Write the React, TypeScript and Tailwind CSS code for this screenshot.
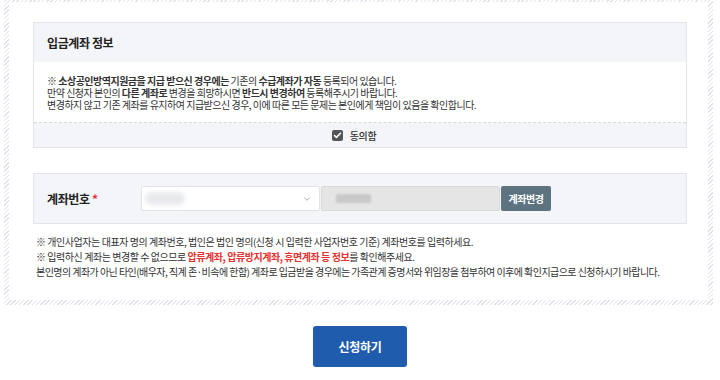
import { ChevronDown, Check } from "lucide-react";

const font = { fontFamily: '"Noto Sans CJK KR", "Noto Sans", sans-serif' };

/* ── 입금계좌 정보 panel ── */
function AccountInfoPanel() {
  return (
    <div className="border border-[#e3e5ea] bg-white">
      <div className="h-[39px] bg-[#f4f5f8] flex items-center px-[13px]">
        <h3 className="text-[12px] font-bold text-[#222] tracking-[-0.4px]">입금계좌 정보</h3>
      </div>
      <div className="px-[13px] pt-[13px] pb-[11px] text-[10px] leading-[12px] text-[#333] tracking-[-0.5px] border-b border-dashed border-[#d6d8dd]">
        <p>
          ※ <b>소상공인방역지원금을 지급 받으신 경우에는</b> 기존의 <b>수급계좌가 자동</b> 등록되어 있습니다.
        </p>
        <p>
          만약 신청자 본인의 <b>다른 계좌로</b> 변경을 희망하시면 <b>반드시 변경하여</b> 등록해주시기 바랍니다.
        </p>
        <p>변경하지 않고 기존 계좌를 유지하여 지급받으신 경우, 이에 따른 모든 문제는 본인에게 책임이 있음을 확인합니다.</p>
      </div>
      <div className="h-[24px] bg-[#f4f5f8] flex items-center justify-center gap-[7px] pr-[12px]">
        <span className="w-[11px] h-[11px] rounded-[2px] bg-[#555] flex items-center justify-center">
          <Check className="w-[9px] h-[9px] text-white" strokeWidth={4} />
        </span>
        <span className="text-[10px] font-medium text-[#333] tracking-[-0.4px]">동의함</span>
      </div>
    </div>
  );
}

/* ── 계좌번호 row ── */
function AccountNumberRow() {
  return (
    <div className="mt-[25px] h-[51px] border border-[#e3e5ea] bg-[#f4f5f8] flex items-center pl-[13px]">
      <div className="w-[94px] text-[12px] font-bold text-[#222] tracking-[-0.4px]">
        계좌번호 <span className="text-[#e8302f]">*</span>
      </div>
      <div className="w-[179px] h-[25px] bg-white border border-[#e1e3e8] rounded-[2px] flex items-center justify-between pl-[3px] pr-[7px]">
        <span className="w-[40px] h-[13px] rounded-full bg-[#e9eaed] blur-[2px]" />
        <ChevronDown className="w-[10px] h-[10px] text-[#999]" />
      </div>
      <div className="w-[179px] h-[25px] ml-[1px] bg-[#e5e5e5] border border-[#d9d9d9] rounded-[2px] flex items-center pl-[14px]">
        <span className="w-[35px] h-[9px] bg-[#c9c9c9] blur-[1px]" />
      </div>
      <button className="ml-[1px] w-[50px] h-[25px] bg-[#5e7380] rounded-[2px] text-white text-[10px] font-bold tracking-[-0.5px]">
        계좌변경
      </button>
    </div>
  );
}

export default function App() {
  return (
    <div className="w-[720px] h-[380px] bg-white overflow-hidden" style={font}>
      <div className="ml-[4px] w-[709px] -mt-[3px] pt-[5px] px-[5px] pb-[5px] bg-[repeating-linear-gradient(135deg,#dfe2ea_0_1px,#ffffff_1px_3px)]">
        <div className="bg-white pt-[20px] pl-[24px] pr-[21px] pb-[21px]">
          <AccountInfoPanel />
          <AccountNumberRow />
          <div className="mt-[10px] pl-[3px] text-[10px] leading-[15px] text-[#333] tracking-[-0.45px]">
            <p>※ 개인사업자는 대표자 명의 계좌번호, 법인은 법인 명의(신청 시 입력한 사업자번호 기준) 계좌번호를 입력하세요.</p>
            <p>
              ※ 입력하신 계좌는 변경할 수 없으므로{" "}
              <b className="text-[#e8302f]">압류계좌, 압류방지계좌, 휴면계좌 등 정보</b>를 확인해주세요.
            </p>
            <p className="tracking-[-0.55px]">
              본인명의 계좌가 아닌 타인(배우자, 직계 존·비속에 한함) 계좌로 입금받을 경우에는 가족관계 증명서와 위임장을 첨부하여 이후에 확인지급으로 신청하시기 바랍니다.
            </p>
          </div>
        </div>
      </div>

      <div className="flex justify-center mt-[21px]">
        <button className="w-[94px] h-[41px] bg-[#1f5cae] rounded-[3px] text-white text-[12px] font-bold tracking-[-0.3px]">
          신청하기
        </button>
      </div>
    </div>
  );
}
